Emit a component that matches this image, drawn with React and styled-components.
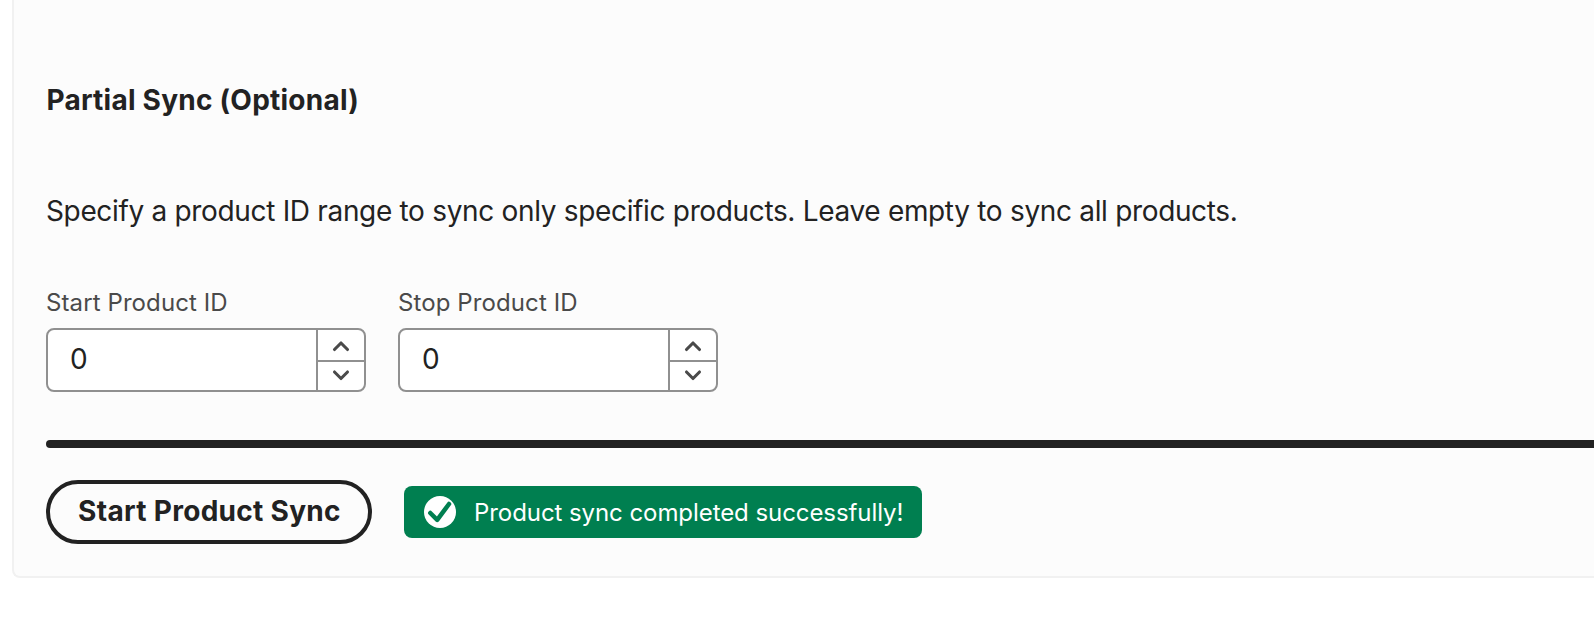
import React from "react";
import styled, { createGlobalStyle } from "styled-components";

const GlobalStyle = createGlobalStyle`
  *, *::before, *::after { box-sizing: border-box; }
  body {
    margin: 0;
    background: #fff;
    color: #222;
    font-family: Inter, "Liberation Sans", sans-serif;
    overflow: hidden;
  }
`;

const Page = styled.main`
  height: 626px;
  padding-left: 12px;
  overflow: hidden;
`;

const Card = styled.section`
  display: flex;
  flex-direction: column;
  height: 578px;
  padding: 82px 0 32px 32px;
  background: #fcfcfc;
  border: 2px solid #f1f1f1;
  border-width: 0 0 2px 2px;
  border-bottom-left-radius: 8px;
`;

const Title = styled.h2`
  margin: 0;
  font-size: 28px;
  line-height: 36px;
  font-weight: 700;
  letter-spacing: 0.24px;
  text-indent: 0.4px;
  white-space: nowrap;
`;

const Description = styled.p`
  margin: 75px 0 0;
  font-size: 28px;
  line-height: 36px;
  letter-spacing: -0.36px;
  word-spacing: 0.2px;
  white-space: nowrap;
`;

const Fields = styled.div`
  display: flex;
  gap: 32px;
  margin-top: 58px;
`;

const Field = styled.label`
  display: flex;
  flex-direction: column;
  gap: 9px;
  width: 320px;
`;

const FieldLabel = styled.span`
  font-size: 24px;
  line-height: 32px;
  color: #4a4a4a;
  letter-spacing: 0.1px;
  white-space: nowrap;
`;

const NumberBox = styled.span`
  display: flex;
  height: 64px;
  background: #fff;
  border: 2px solid #909090;
  border-radius: 8px;
  overflow: hidden;
`;

const NumberInput = styled.input`
  flex: 1;
  min-width: 0;
  padding: 0 0 2px 22px;
  border: 0;
  outline: 0;
  background: transparent;
  color: #222;
  font: 400 28px/36px Inter, "Liberation Sans", sans-serif;
`;

const Stepper = styled.span`
  display: flex;
  flex-direction: column;
  width: 48px;
  border-left: 2px solid #909090;
`;

const StepButton = styled.button`
  display: flex;
  align-items: center;
  justify-content: center;
  height: ${(p) => (p.$up ? "32px" : "28px")};
  padding: ${(p) => (p.$up ? "1px 0 0" : "0 0 2px")};
  border: 0;
  border-bottom: ${(p) => (p.$up ? "2px solid #909090" : "0")};
  background: transparent;
`;

const Divider = styled.hr`
  flex: none;
  width: 100%;
  height: 8px;
  margin: 48px 0 32px;
  border: 0;
  border-radius: 4px 0 0 4px;
  background: #222;
`;

const Actions = styled.div`
  display: flex;
  align-items: center;
  gap: 32px;
`;

const SyncButton = styled.button`
  width: 326px;
  height: 64px;
  padding: 0 0 2px 1px;
  border: 4px solid #222;
  border-radius: 32px;
  background: transparent;
  color: #222;
  font: 700 28px/36px Inter, "Liberation Sans", sans-serif;
  letter-spacing: 0.3px;
  white-space: nowrap;
`;

const Toast = styled.div`
  display: flex;
  align-items: center;
  width: 518px;
  height: 52px;
  padding-left: 20px;
  border-radius: 8px;
  background: #007f50;
  color: #fff;
  font-size: 24px;
  line-height: 32px;
  white-space: nowrap;
`;

const ToastText = styled.span`
  margin-left: 18px;
  padding-top: 2px;
  letter-spacing: -0.07px;
`;

function Chevron({ up }) {
  return (
    <svg width="20" height="14" viewBox="0 0 20 14" fill="none" stroke="#4a4a4a" strokeWidth="3.1" strokeLinecap="round" strokeLinejoin="round">
      <path d={up ? "M3.5 10.5L10 4L16.5 10.5" : "M3.5 4L10 10.5L16.5 4"} />
    </svg>
  );
}

function CheckCircle() {
  return (
    <svg width="32" height="32" viewBox="0 0 32 32" fill="none">
      <circle cx="16" cy="16" r="16" fill="#fff" />
      <path d="M6.3 17L13.2 23.8L25 8" stroke="#007f50" strokeWidth="4.5" strokeLinejoin="round" strokeLinecap="round" />
    </svg>
  );
}

function NumberField({ label }) {
  return (
    <Field>
      <FieldLabel>{label}</FieldLabel>
      <NumberBox>
        <NumberInput type="text" inputMode="numeric" defaultValue="0" />
        <Stepper>
          <StepButton $up type="button" aria-label="Increase"><Chevron up /></StepButton>
          <StepButton type="button" aria-label="Decrease"><Chevron /></StepButton>
        </Stepper>
      </NumberBox>
    </Field>
  );
}

export default function App() {
  return (
    <Page>
      <GlobalStyle />
      <Card>
        <Title>Partial Sync (Optional)</Title>
        <Description>
          Specify a product ID range to sync only specific products. Leave empty to sync all products.
        </Description>
        <Fields>
          <NumberField label="Start Product ID" />
          <NumberField label="Stop Product ID" />
        </Fields>
        <Divider />
        <Actions>
          <SyncButton type="button">Start Product Sync</SyncButton>
          <Toast role="status">
            <CheckCircle />
            <ToastText>Product sync completed successfully!</ToastText>
          </Toast>
        </Actions>
      </Card>
    </Page>
  );
}
